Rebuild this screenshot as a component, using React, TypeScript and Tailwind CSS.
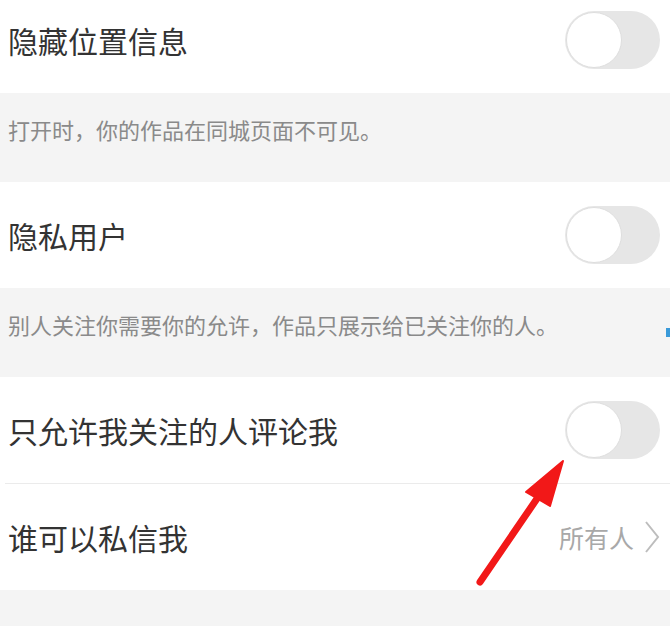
const font = { fontFamily: '"Noto Sans CJK SC", "Noto Sans", sans-serif' };

function Toggle() {
  return (
    <div className="w-[95px] h-[58px] rounded-full bg-[#e6e6e6] p-px flex items-center">
      <div className="w-[56px] h-[56px] rounded-full bg-white border border-[#dedede]" />
    </div>
  );
}

function Desc({ text }: { text: string }) {
  return (
    <div className="h-[89px] bg-[#f4f4f4] pl-[8px] pt-[24px]">
      <span className="text-[22px] leading-[24px] text-[#8a8a8a]">{text}</span>
    </div>
  );
}

export default function App() {
  return (
    <div className="relative w-[670px] h-[626px] bg-[#f4f4f4] overflow-hidden" style={font}>
      <div className="h-[93px] bg-white flex items-center justify-between pl-[8px] pr-[10px] pb-[14px]">
        <span className="text-[30px] leading-none text-[#333]">隐藏位置信息</span>
        <Toggle />
      </div>
      <Desc text="打开时，你的作品在同城页面不可见。" />

      <div className="h-[106px] bg-white flex items-center justify-between pl-[8px] pr-[10px]">
        <span className="text-[30px] leading-none text-[#333]">隐私用户</span>
        <Toggle />
      </div>
      <Desc text="别人关注你需要你的允许，作品只展示给已关注你的人。" />

      <div className="bg-white">
        <div className="h-[106px] flex items-center justify-between pl-[8px] pr-[10px]">
          <span className="text-[30px] leading-none text-[#333]">只允许我关注的人评论我</span>
          <Toggle />
        </div>
        <div className="ml-[5px] h-px bg-[#ebebeb]" />
        <div className="h-[106px] flex items-center justify-between pl-[8px] pr-[10px]">
          <span className="text-[30px] leading-none text-[#333]">谁可以私信我</span>
          <div className="flex items-center gap-[10px]">
            <span className="text-[25px] leading-none text-[#a8a8a8]">所有人</span>
            <svg width="16" height="34" viewBox="0 0 16 34" fill="none">
              <path d="M2 2l12 15L2 32" stroke="#bdbdbd" strokeWidth="2" />
            </svg>
          </div>
        </div>
      </div>

      <div className="absolute left-[666px] top-[328px] w-[4px] h-[9px] bg-[#3a9ad9]" />

      <svg className="absolute left-0 top-0" width="670" height="626" viewBox="0 0 670 626">
        <path d="M480 582L547 484" stroke="#f21818" strokeWidth="7" strokeLinecap="round" />
        <path d="M563 461L526 492L550 506Z" fill="#f21818" stroke="#f21818" strokeWidth="2" strokeLinejoin="round" />
      </svg>
    </div>
  );
}
